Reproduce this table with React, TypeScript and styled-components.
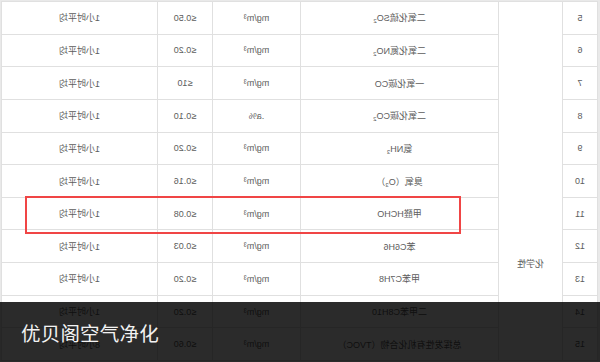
import React from 'react';
import styled, { createGlobalStyle } from 'styled-components';

const GlobalStyle = createGlobalStyle`
  html, body {
    margin: 0;
    padding: 0;
    background: #fff;
    overflow: hidden;
  }
`;

// Frame around the picture
const Frame = styled.div`
  position: relative;
  width: 600px;
  height: 362px;
  overflow: hidden;
  background: #fff;
`;

// The table image is shown flipped left-to-right
const Mirror = styled.div`
  width: 600px;
  box-sizing: border-box;
  transform: scaleX(-1);
  background: #e9e9e9;
  padding: 1px 1px 0 2px;
`;

const Table = styled.table`
  width: 597px;
  border-collapse: collapse;
  table-layout: fixed;
  background: #fff;
  font-family: 'Liberation Sans', 'Noto Sans CJK SC', sans-serif;
  font-size: 9px;
  color: #5c5c5c;
`;

const Col = styled.col<{ $w?: number }>`
  ${(p) => (p.$w ? `width: ${p.$w}px;` : '')}
`;

const Row = styled.tr`
  height: 32.65px;
`;

const Cell = styled.td`
  border: 1px solid #e0e0e0;
  text-align: center;
  vertical-align: middle;
  padding: 0;
  white-space: nowrap;
  overflow: hidden;
`;

const GroupCell = styled(Cell)`
  vertical-align: top;
  padding-top: 255px;
`;

const Sub = styled.span`
  font-size: 6px;
  vertical-align: -2px;
`;

// Red marker round the formaldehyde row
const Highlight = styled.div`
  position: absolute;
  left: 25px;
  top: 196px;
  width: 432px;
  height: 34px;
  border: 2px solid #f04545;
  pointer-events: none;
`;

const Caption = styled.div`
  position: absolute;
  left: 0;
  right: 0;
  bottom: 0;
  height: 60px;
  display: flex;
  align-items: center;
  padding-left: 21px;
  background: rgba(0, 0, 0, 0.83);
  color: #f2f2f2;
  font-family: 'Noto Sans CJK SC', 'Noto Sans', sans-serif;
  font-size: 19.5px;
  letter-spacing: 0.2px;
`;

type Item = {
  no: number;
  name: React.ReactNode;
  unit: string;
  value: string;
  period: string;
};

const items: Item[] = [
  { no: 5, name: <>二氧化硫SO<Sub>2</Sub></>, unit: 'mg/m³', value: '≤0.50', period: '1小时平均' },
  { no: 6, name: <>二氧化氮NO<Sub>2</Sub></>, unit: 'mg/m³', value: '≤0.20', period: '1小时平均' },
  { no: 7, name: '一氧化碳CO', unit: 'mg/m³', value: '≤10', period: '1小时平均' },
  { no: 8, name: <>二氧化碳CO<Sub>2</Sub></>, unit: '.a%', value: '≤0.10', period: '1小时平均' },
  { no: 9, name: <>氨NH<Sub>3</Sub></>, unit: 'mg/m³', value: '≤0.20', period: '1小时平均' },
  { no: 10, name: <>臭氧（O<Sub>3</Sub>）</>, unit: 'mg/m³', value: '≤0.16', period: '1小时平均' },
  { no: 11, name: '甲醛HCHO', unit: 'mg/m³', value: '≤0.08', period: '1小时平均' },
  { no: 12, name: '苯C6H6', unit: 'mg/m³', value: '≤0.03', period: '1小时平均' },
  { no: 13, name: '甲苯C7H8', unit: 'mg/m³', value: '≤0.20', period: '1小时平均' },
  { no: 14, name: '二甲苯C8H10', unit: 'mg/m³', value: '≤0.20', period: '1小时平均' },
  { no: 15, name: '总挥发性有机化合物（TVOC）', unit: 'mg/m³', value: '≤0.60', period: '8小时平均' },
];

const App: React.FC = () => (
  <Frame>
    <GlobalStyle />
    <Mirror>
      <Table>
        <colgroup>
          <Col $w={35} />
          <Col $w={64} />
          <Col $w={198} />
          <Col $w={88} />
          <Col $w={55} />
          <Col />
        </colgroup>
        <tbody>
          {items.map((item, i) => (
            <Row key={item.no}>
              <Cell>{item.no}</Cell>
              {i === 0 && <GroupCell rowSpan={items.length}>化学性</GroupCell>}
              <Cell>{item.name}</Cell>
              <Cell>{item.unit}</Cell>
              <Cell>{item.value}</Cell>
              <Cell>{item.period}</Cell>
            </Row>
          ))}
        </tbody>
      </Table>
    </Mirror>
    <Highlight />
    <Caption>优贝阁空气净化</Caption>
  </Frame>
);

export default App;
